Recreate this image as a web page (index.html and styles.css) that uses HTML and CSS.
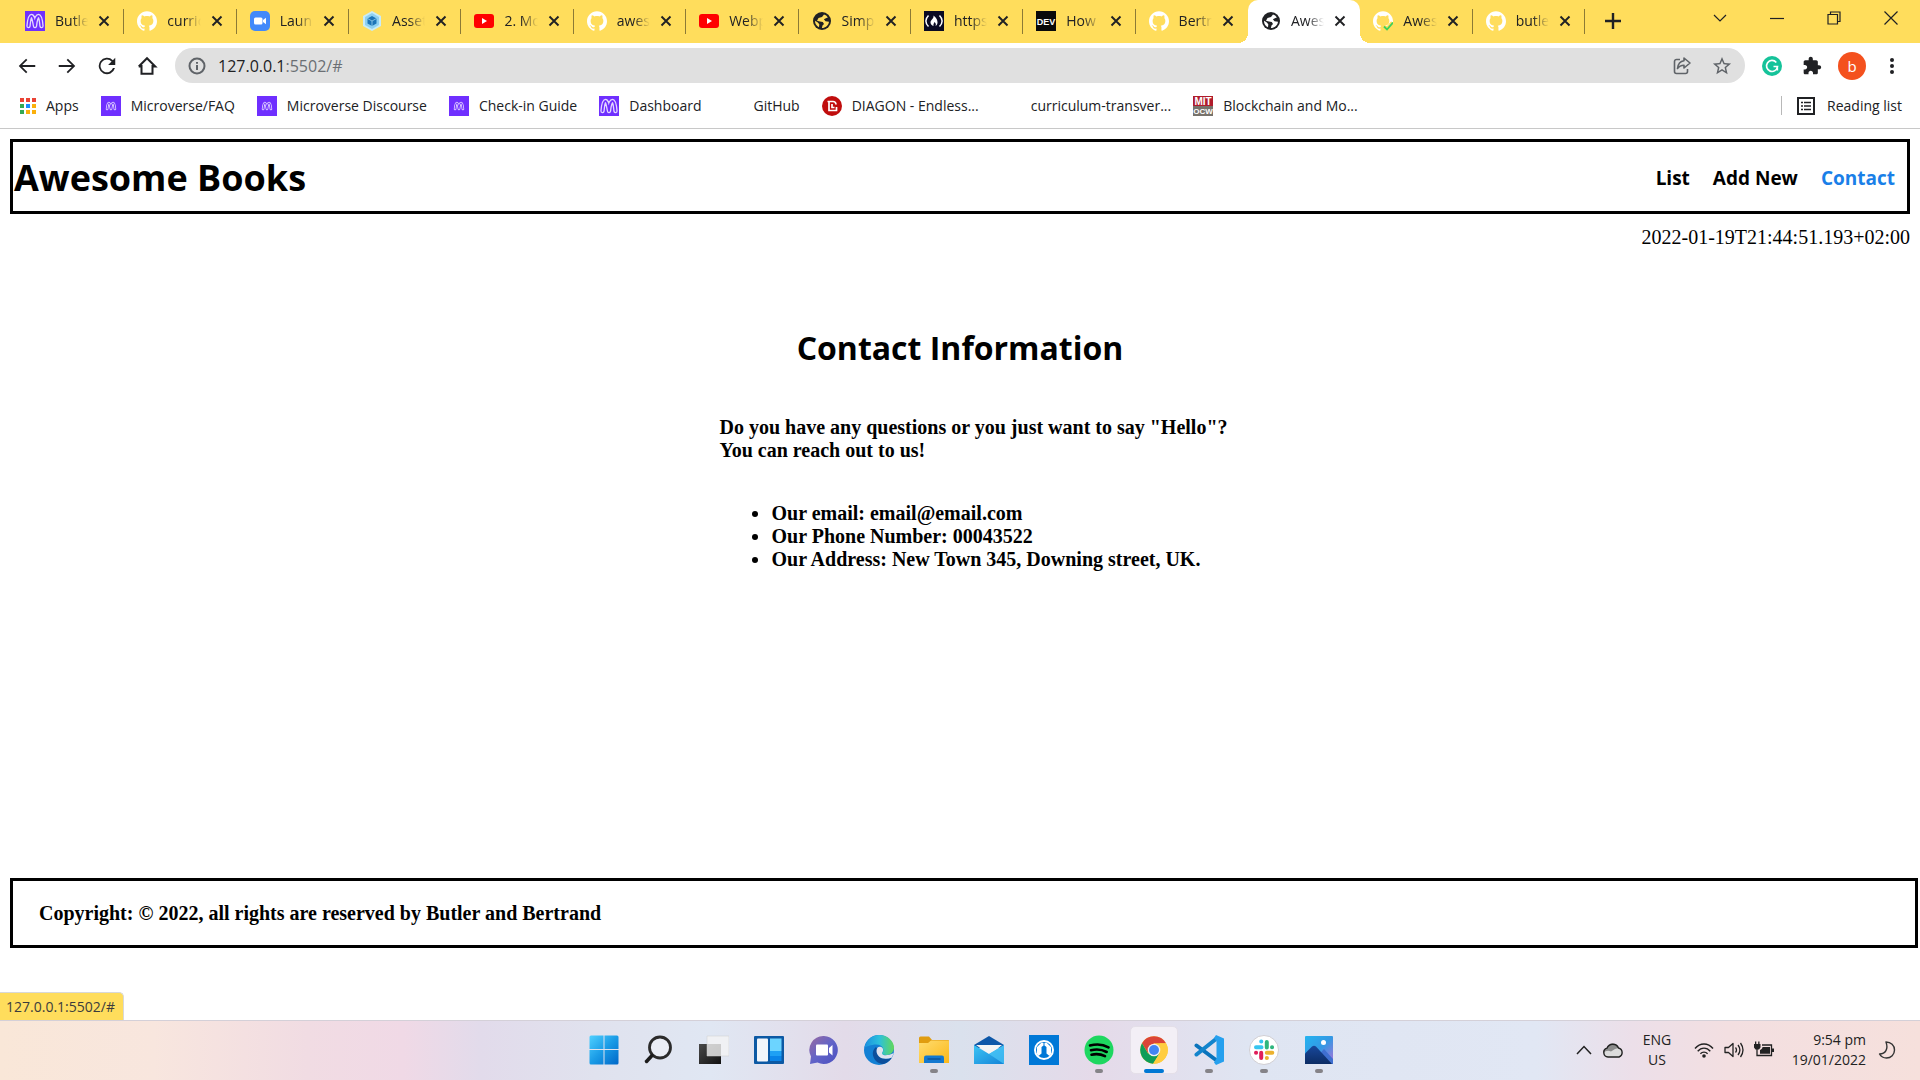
FILE: index.html
```
<!DOCTYPE html>
<html lang="en">
<head>
<meta charset="utf-8">
<title>Awesome Books</title>
<meta name="viewport" content="width=device-width, initial-scale=1">
<link rel="stylesheet" href="styles.css">
</head>
<body>
<svg class="sprite" aria-hidden="true">
  <defs>
    <linearGradient id="g-win" x1="0" y1="0" x2="1" y2="1"><stop offset="0" stop-color="#4fd0ff"/><stop offset=".5" stop-color="#1a9be6"/><stop offset="1" stop-color="#0067c8"/></linearGradient>
    <linearGradient id="g-dark" x1="0" y1="0" x2="1" y2="1"><stop offset="0" stop-color="#4a4a4a"/><stop offset="1" stop-color="#111"/></linearGradient>
    <linearGradient id="g-chat" x1="0" y1="0" x2="1" y2="1"><stop offset="0" stop-color="#9a6aa0"/><stop offset=".5" stop-color="#6264c8"/><stop offset="1" stop-color="#4a4fc0"/></linearGradient>
    <linearGradient id="g-edge" x1="0" y1="0" x2="1" y2="0"><stop offset="0" stop-color="#1a8fe0"/><stop offset=".5" stop-color="#2cc0dc"/><stop offset="1" stop-color="#62d858"/></linearGradient>
    <linearGradient id="g-folder" x1="0" y1="0" x2="1" y2="1"><stop offset="0" stop-color="#ffdc70"/><stop offset="1" stop-color="#fbb818"/></linearGradient>
    <linearGradient id="g-mail" x1="0" y1="0" x2="1" y2="1"><stop offset="0" stop-color="#3cc4f4"/><stop offset="1" stop-color="#1484d8"/></linearGradient>
    <linearGradient id="g-photo" x1="0" y1="0" x2="1" y2="1"><stop offset="0" stop-color="#24b4f0"/><stop offset=".5" stop-color="#3498e4"/><stop offset="1" stop-color="#b070d8"/></linearGradient>
    <linearGradient id="g-hill" x1="0" y1="0" x2="0" y2="1"><stop offset="0" stop-color="#18489c"/><stop offset="1" stop-color="#0c2c64"/></linearGradient>
  </defs>
  <symbol id="loops" viewBox="0 0 20 20"><g fill="none" stroke-linecap="round" stroke-linejoin="round"><path stroke="#e4d8ff" stroke-width="4.400" d="M3.500 15C4 9 5 5 6.500 5s2.500 4 3.500 10C10.500 9 12 5 13.500 5s2.500 4 3 10"/><path stroke="#6f2fff" stroke-width="1.800" d="M3.500 15C4 9 5 5 6.500 5s2.500 4 3.500 10C10.500 9 12 5 13.500 5s2.500 4 3 10"/></g></symbol>
  <symbol id="micro" viewBox="0 0 20 20"><path fill="#6f2fff" d="M0 0h20v20H0z"/><use href="#loops" width="20" height="20"/></symbol>
  <symbol id="micro-sm" viewBox="0 0 20 20"><path fill="#6f2fff" d="M0 0h20v20H0z"/><use href="#loops" x="4" y="4" width="12" height="12"/></symbol>
  <symbol id="github" viewBox="0 0 24 24"><path fill="#fff" d="M12 .297c-6.630 0-12 5.373-12 12 0 5.303 3.438 9.800 8.205 11.385.6.113.82-.258.82-.577 0-.285-.01-1.040-.015-2.040-3.338.724-4.042-1.610-4.042-1.610C4.422 18.070 3.633 17.700 3.633 17.700c-1.087-.744.084-.729.084-.729 1.205.084 1.838 1.236 1.838 1.236 1.070 1.835 2.809 1.305 3.495.998.108-.776.417-1.305.76-1.605-2.665-.3-5.466-1.332-5.466-5.930 0-1.310.465-2.380 1.235-3.220-.135-.303-.54-1.523.105-3.176 0 0 1.005-.322 3.300 1.230.96-.267 1.980-.399 3-.405 1.020.006 2.040.138 3 .405 2.280-1.552 3.285-1.230 3.285-1.230.645 1.653.24 2.873.12 3.176.765.84 1.230 1.910 1.230 3.220 0 4.610-2.805 5.625-5.475 5.920.42.36.81 1.096.81 2.220 0 1.606-.015 2.896-.015 3.286 0 .315.21.69.825.57C20.565 22.092 24 17.592 24 12.297c0-6.627-5.373-12-12-12"/></symbol>
  <symbol id="zoomapp" viewBox="0 0 20 20"><rect width="20" height="20" rx="5" fill="#4289fa"/><rect x="4" y="6.500" width="8.500" height="7" rx="1.500" fill="#fff"/><path fill="#fff" d="M13 9l3-2.200v6.400L13 11z"/></symbol>
  <symbol id="webpack" viewBox="0 0 20 20"><path fill="#c8ecfa" d="M10 0l9 5v10l-9 5-9-5V5z"/><path fill="#8ed0f2" d="M10 2l7 4v8l-7 4-7-4V6z"/><path fill="#1c74b8" d="M10 5l4.500 2.500v5L10 15l-4.500-2.500v-5z"/><path fill="none" stroke="#a8dcf4" stroke-width=".7" d="M5.500 7.500L10 10l4.500-2.500M10 10v5"/></symbol>
  <symbol id="youtube" viewBox="0 0 20 20"><rect y="3" width="20" height="14" rx="3" fill="#f00"/><path fill="#fff" d="M8 7l5 3-5 3z"/></symbol>
  <symbol id="globe" viewBox="0 0 20 20"><circle cx="10" cy="10" r="9" fill="#202124"/><path class="globe-land" d="M12 3.500l-2 2.600-3.500 1L5 9.800l3 .7 2.800.5 1.200 2-1.500 1.500-.6 2.500c3.500 0 6.800-2.600 7.100-6.300l-3.500-.4-1.600-2.100 2.500-1.300 1.500-.5A7 7 0 0 0 12 3.500zM3 9.800l2.500 1.500 1.800 2-.3 2.900A7 7 0 0 1 3 9.800z"/></symbol>
  <symbol id="fcc" viewBox="0 0 20 20"><path fill="#0a0a23" d="M0 0h20v20H0z"/><path fill="none" stroke="#fff" stroke-width="1.500" d="M4.500 4.500C1 8 1 12 4.500 15.500M15.500 4.500C19 8 19 12 15.500 15.500"/><path fill="#fff" d="M9.500 4.500c3 2 4 5 4 7s-1 3-2 3.500c.7-1.500.5-2.500-1-4-.3 1-1.500 2-1 4-1.500-.5-3-1.600-3-3.600 0-2.500 3.500-3.400 3-6.900z"/></symbol>
  <symbol id="close" viewBox="0 0 12 12"><path stroke="#202124" stroke-width="1.900" d="M1.500 1.500l9 9m0-9l-9 9"/></symbol>
</svg>

<header class="browser">
  <div class="tabbar">
    <div class="tabs" role="tablist">
      <div class="tab"><svg class="fav"><use href="#micro"/></svg><span class="tab-title">Butle</span><button class="tab-close" aria-label="Close tab"><svg><use href="#close"/></svg></button></div>
      <div class="tab"><svg class="fav"><use href="#github"/></svg><span class="tab-title">curric</span><button class="tab-close" aria-label="Close tab"><svg><use href="#close"/></svg></button></div>
      <div class="tab"><svg class="fav"><use href="#zoomapp"/></svg><span class="tab-title">Laun</span><button class="tab-close" aria-label="Close tab"><svg><use href="#close"/></svg></button></div>
      <div class="tab"><svg class="fav"><use href="#webpack"/></svg><span class="tab-title">Asset</span><button class="tab-close" aria-label="Close tab"><svg><use href="#close"/></svg></button></div>
      <div class="tab"><svg class="fav"><use href="#youtube"/></svg><span class="tab-title">2. Mo</span><button class="tab-close" aria-label="Close tab"><svg><use href="#close"/></svg></button></div>
      <div class="tab"><svg class="fav"><use href="#github"/></svg><span class="tab-title">awes</span><button class="tab-close" aria-label="Close tab"><svg><use href="#close"/></svg></button></div>
      <div class="tab"><svg class="fav"><use href="#youtube"/></svg><span class="tab-title">Webp</span><button class="tab-close" aria-label="Close tab"><svg><use href="#close"/></svg></button></div>
      <div class="tab"><svg class="fav"><use href="#globe"/></svg><span class="tab-title">Simp</span><button class="tab-close" aria-label="Close tab"><svg><use href="#close"/></svg></button></div>
      <div class="tab"><svg class="fav"><use href="#fcc"/></svg><span class="tab-title">https</span><button class="tab-close" aria-label="Close tab"><svg><use href="#close"/></svg></button></div>
      <div class="tab"><svg class="fav" viewBox="0 0 20 20"><path fill="#0a0a0a" d="M0 0h20v20H0z"/><text x="10" y="14" class="ico-dev">DEV</text></svg><span class="tab-title">How</span><button class="tab-close" aria-label="Close tab"><svg><use href="#close"/></svg></button></div>
      <div class="tab before-active"><svg class="fav"><use href="#github"/></svg><span class="tab-title">Bertr</span><button class="tab-close" aria-label="Close tab"><svg><use href="#close"/></svg></button></div>
      <div class="tab active"><svg class="fav"><use href="#globe"/></svg><span class="tab-title">Awes</span><button class="tab-close" aria-label="Close tab"><svg><use href="#close"/></svg></button></div>
      <div class="tab"><svg class="fav" viewBox="0 0 20 20"><use href="#github" width="20" height="20"/><path stroke="#ffdd5c" stroke-width="5" fill="none" d="M11 16l3 3 6-7"/><path stroke="#3bd15a" stroke-width="1.800" fill="none" d="M11 15.500l3 3 6-7"/></svg><span class="tab-title">Awes</span><button class="tab-close" aria-label="Close tab"><svg><use href="#close"/></svg></button></div>
      <div class="tab"><svg class="fav"><use href="#github"/></svg><span class="tab-title">butle</span><button class="tab-close" aria-label="Close tab"><svg><use href="#close"/></svg></button></div>
    </div>
    <button class="new-tab" aria-label="New tab"><svg viewBox="0 0 16 16" width="16" height="16"><path stroke="#202124" stroke-width="2.400" d="M8 0v16M0 8h16"/></svg></button>
    <div class="window-controls">
      <button aria-label="Search tabs"><svg viewBox="0 0 14 14" width="14" height="14"><path d="M1 4l6 6 6-6"/></svg></button>
      <button aria-label="Minimize"><svg viewBox="0 0 14 14" width="14" height="14"><path d="M0 7.500h14"/></svg></button>
      <button aria-label="Restore"><svg viewBox="0 0 14 14" width="14" height="14"><path d="M1 3.500h9.500V13H1zM3.500 3.500V1H13v9.500h-2.500"/></svg></button>
      <button aria-label="Close"><svg viewBox="0 0 14 14" width="14" height="14"><path d="M.5.500l13 13m0-13l-13 13"/></svg></button>
    </div>
  </div>

  <div class="toolbar">
    <div class="nav-buttons">
      <button aria-label="Back"><svg viewBox="0 0 24 24"><path d="M21 11H6.800l5.600-5.600L11 4l-8 8 8 8 1.400-1.400L6.800 13H21z"/></svg></button>
      <button aria-label="Forward"><svg viewBox="0 0 24 24"><path d="M3 11h14.200l-5.600-5.600L13 4l8 8-8 8-1.400-1.400 5.600-5.600H3z"/></svg></button>
      <button aria-label="Reload"><svg viewBox="0 0 24 24"><path d="M18.400 5.600A9 9 0 1 0 20.700 14.300h-2.200A7 7 0 1 1 17 7l-3.800 3.800H21V3z"/></svg></button>
      <button aria-label="Home"><svg viewBox="0 0 24 24"><path fill="none" stroke="#202124" stroke-width="2.200" d="M6 11v9.500h12V11M3 12.500L12 3.500l9 9h-3.200M3 12.500h3"/></svg></button>
    </div>
    <div class="omnibox">
      <svg class="info" viewBox="0 0 18 18"><circle cx="9" cy="9" r="7.500"/><path d="M9 8v5M9 5v1.800"/></svg>
      <a class="url" href="#">127.0.0.1<span>:5502/#</span></a>
      <button aria-label="Share"><svg viewBox="0 0 20 20"><path fill="none" stroke="#5f6368" stroke-width="1.600" stroke-linejoin="round" d="M8 3.500H4.500a2 2 0 0 0-2 2v10a2 2 0 0 0 2 2h9a2 2 0 0 0 2-2V13M12 2l6 5-6 5V9.200c-3 0-5 1-6.500 3.300C6 8 8.500 5.200 12 4.800z"/></svg></button>
      <button aria-label="Bookmark"><svg viewBox="1 1 22 22"><path fill="#5f6368" d="M22 9.240l-7.190-.62L12 2 9.190 8.630 2 9.240l5.460 4.730L5.820 21 12 17.270 18.180 21l-1.630-7.030L22 9.240zM12 15.400l-3.760 2.270 1-4.280-3.320-2.880 4.380-.38L12 6.100l1.710 4.040 4.380.38-3.320 2.880 1 4.280L12 15.400z"/></svg></button>
    </div>
    <div class="extensions">
      <button aria-label="Grammarly"><svg viewBox="0 0 20 20" width="20" height="20"><circle cx="10" cy="10" r="10" fill="#15c39a"/><path fill="none" stroke="#fff" stroke-width="1.700" d="M14.300 6.500A5.500 5.500 0 1 0 15.500 10.500H11.500M15.300 10.500V14.500"/></svg></button>
      <button aria-label="Extensions"><svg viewBox="0 0 24 24" width="20" height="20"><path fill="#202124" d="M20.500 11H19V7c0-1.100-.9-2-2-2h-4V3.500C13 2.120 11.880 1 10.500 1S8 2.120 8 3.500V5H4c-1.100 0-1.990.9-1.990 2v3.800H3.500c1.490 0 2.700 1.210 2.700 2.700s-1.210 2.700-2.700 2.700H2V20c0 1.100.9 2 2 2h3.800v-1.500c0-1.490 1.210-2.700 2.700-2.700 1.490 0 2.700 1.210 2.700 2.700V22H17c1.100 0 2-.9 2-2v-4h1.500c1.380 0 2.500-1.120 2.500-2.500S21.880 11 20.500 11z"/></svg></button>
      <button class="avatar" aria-label="Profile">b</button>
      <button aria-label="Menu"><svg viewBox="0 0 20 20" width="20" height="20"><g fill="#202124"><circle cx="10" cy="4" r="2"/><circle cx="10" cy="10" r="2"/><circle cx="10" cy="16" r="2"/></g></svg></button>
    </div>
  </div>

  <nav class="bookmarks" aria-label="Bookmarks">
    <a href="#" class="apps"><svg viewBox="0 0 16 16"><path fill="#ea4335" d="M0 0h4v4H0zM6 0h4v4H6zM12 0h4v4h-4z"/><path fill="#34a853" d="M0 6h4v4H0zM0 12h4v4H0z"/><path fill="#1a8cff" d="M6 6h4v4H6z"/><path fill="#fbb00c" d="M12 6h4v4h-4zM6 12h4v4H6zM12 12h4v4h-4z"/></svg>Apps</a>
    <a href="#"><svg><use href="#micro-sm"/></svg>Microverse/FAQ</a>
    <a href="#"><svg><use href="#micro-sm"/></svg>Microverse Discourse</a>
    <a href="#"><svg><use href="#micro-sm"/></svg>Check-in Guide</a>
    <a href="#"><svg><use href="#micro"/></svg>Dashboard</a>
    <a href="#"><svg><use href="#github"/></svg>GitHub</a>
    <a href="#"><svg viewBox="0 0 20 20"><circle cx="10" cy="10" r="10" fill="#c00d0d"/><path fill="none" stroke="#fff" stroke-width="1.700" d="M5.500 5.500H11a3 3 0 0 1 3 3M7 5.500v9h7.500v-3.500M10 8v3.500h2.500"/></svg>DIAGON - Endless...</a>
    <a href="#"><svg><use href="#github"/></svg>curriculum-transver...</a>
    <a href="#"><svg viewBox="0 0 20 20"><path fill="#b01c2c" d="M0 0h20v10H0z"/><path fill="#77736c" d="M0 10h20v10H0z"/><text x="10" y="9" class="ico-mit">MIT</text><text x="10" y="18" class="ico-ocw">OCW</text></svg>Blockchain and Mo...</a>
    <a href="#" class="reading"><svg viewBox="0 0 18 18"><path fill="none" stroke="#202124" stroke-width="2" d="M1 1h16v16H1z"/><path stroke="#202124" stroke-width="1.600" d="M4 5.500h2M7 5.500h7M4 9h2M7 9h7M4 12.500h2M7 12.500h7"/></svg>Reading list</a>
  </nav>
</header>

<div class="page">
  <header class="site-header">
    <h1>Awesome Books</h1>
    <nav class="site-nav"><a href="#">List</a><a href="#">Add New</a><a href="#" class="current">Contact</a></nav>
  </header>
  <time class="stamp">2022-01-19T21:44:51.193+02:00</time>
  <main class="contact">
    <h2>Contact Information</h2>
    <div class="details">
      <p>Do you have any questions or you just want to say "Hello"?<br>You can reach out to us!</p>
      <ul>
        <li>Our email: email@email.com</li>
        <li>Our Phone Number: 00043522</li>
        <li>Our Address: New Town 345, Downing street, UK.</li>
      </ul>
    </div>
  </main>
  <footer class="site-footer">Copyright: © 2022, all rights are reserved by Butler and Bertrand</footer>
  <div class="status">127.0.0.1:5502/#</div>
</div>

<div class="taskbar">
  <div class="launcher">
    <button aria-label="Start"><svg viewBox="0 0 30 30"><path fill="url(#g-win)" d="M2 .5h12.500V14H.5V2A1.500 1.500 0 0 1 2 .5zM15.500.5H28A1.500 1.500 0 0 1 29.500 2v12h-14zM.5 15h14v14.500H2A1.500 1.500 0 0 1 .5 28zM15.500 15h14v13a1.500 1.500 0 0 1-1.500 1.500H15.500z"/></svg></button>
    <button aria-label="Search"><svg viewBox="0 0 30 30"><circle cx="16" cy="12.500" r="10.500" fill="#ffffff55" stroke="#2b2b2b" stroke-width="2.800"/><path stroke="#1c1c1c" stroke-width="3.500" stroke-linecap="round" d="M8 20.500l-5.500 6"/></svg></button>
    <button aria-label="Task view"><svg viewBox="0 0 30 30"><path fill="url(#g-dark)" d="M0 9h22v20H0z"/><path fill="#f4f4f4" fill-opacity=".8" stroke="#ccc" stroke-width=".5" d="M8 1h22v20H8z"/></svg></button>
    <button aria-label="Widgets"><svg viewBox="0 0 30 30"><rect y="1" width="30" height="28" rx="1" fill="#0c59a4"/><rect x="3" y="3.500" width="11" height="23" rx="1" fill="#f3f6fa"/><path fill="#6cd4ff" d="M16 3.500h11.500V16H16z"/><path fill="#1ea0f4" d="M16 16h11.500v5H16z"/><path fill="#0a84e8" d="M16 21h11.500v5H16z"/></svg></button>
    <button aria-label="Chat"><svg viewBox="0 0 30 30"><path fill="url(#g-chat)" d="M15 1a14 14 0 1 1-6.500 26.500L1 29l1-7.500A14 14 0 0 1 15 1z"/><rect x="7" y="9.500" width="12" height="11" rx="1" fill="#fff"/><path fill="#fff" d="M20 13l3.500-3v10.500l-3.500-3z"/></svg></button>
    <button aria-label="Edge"><svg viewBox="0 0 30 30"><circle cx="15" cy="15" r="15" fill="#1380d4"/><path fill="url(#g-edge)" d="M.5 12.500C2 5 8 0 15 0c9 0 15 6.500 15 12.500 0 5-4 7.500-8 7.500-3 0-4.500-1-4-2 1-1 1.500-2 1.200-4C18.500 11 16 9.500 12 9.500 7 9.500 2.500 12 .5 12.500z"/><path fill="#0c4f9c" d="M12 12c-3 2.500-4 6-2.500 10 1.500 4.500 6 7 10 7a15 15 0 0 0 8.500-6.500c-5 2.500-12 1.500-13.500-2.500-.8-2-.6-4-.5-5z"/><path fill="#dfe2ee" d="M12.500 16c0-3 1.500-4.500 3.800-4.300C18.500 12 19.500 14 19 16c-.6 1.800-1.500 2-.8 3 1.500 2 6.500 1.500 11.500-1l-1.700 4.500c-5 2-10.500 1.500-13-1-1.500-1.500-2.500-3.500-2.500-5.500z"/></svg></button>
    <button aria-label="File Explorer" class="running"><svg viewBox="0 0 30 30"><path fill="#e09c10" d="M0 3a1.500 1.500 0 0 1 1.500-1.500H10L13 5H29a1 1 0 0 1 1 1v6H0z"/><path fill="url(#g-folder)" d="M0 8h9l3-2.500h17a1 1 0 0 1 1 1V28H0z"/><path fill="#1278d0" d="M5 28v-5.500a2 2 0 0 1 2-2h16a2 2 0 0 1 2 2V28z"/><path stroke="#0b4a8c" stroke-width="1.200" d="M8.500 24h13"/></svg></button>
    <button aria-label="Mail"><svg viewBox="0 0 30 30"><path fill="#0d57a8" d="M0 10L15 1l15 9v3H0z"/><path fill="#f4f4f4" d="M2 10h26L16 20z"/><path fill="url(#g-mail)" d="M0 10l15 9 15-9v19H0z"/><path fill="#4cc8f8" fill-opacity=".7" d="M30 10v19L15 19z"/></svg></button>
    <button aria-label="Headset app"><svg viewBox="0 0 30 30"><path fill="#0078d7" d="M0 0h30v30H0z"/><circle cx="15" cy="15" r="9" fill="none" stroke="#fff" stroke-width="2"/><path fill="#fff" d="M8 12l4.500-4.500L14.500 8v2.500L12.500 12v6.500L9.500 21 8 19zM22 12l-4.500-4.500L15.500 8v2.500l2 1.500v6.500l3 2.500 1.500-2z"/></svg></button>
    <button aria-label="Spotify" class="running"><svg viewBox="0 0 30 30"><circle cx="15" cy="15" r="14.500" fill="#1ed760"/><path fill="none" stroke="#000" stroke-linecap="round" stroke-width="2.600" d="M6 10.500c6-1.600 13.500-1 18.500 1.800M7 15.300c5.500-1.400 11-.8 15.700 1.700M7.500 19.700c4.500-1.100 9.500-.6 13.500 1.500"/></svg></button>
    <button aria-label="Chrome" class="running focused"><svg viewBox="0 0 30 30"><circle cx="15" cy="15" r="13.800" fill="#ffcd40"/><path fill="#db4437" d="M3 8.200A13.800 13.800 0 0 1 27 8.200H15L9 18z"/><path fill="#0f9d58" d="M3 8.200a13.800 13.800 0 0 0 11 20.600L20.500 18.500H9z"/><path fill="#ffcd40" d="M27 8.200A13.800 13.800 0 0 1 14.200 28.800l6.500-10.500V8.200z"/><circle cx="15" cy="15" r="6.300" fill="#f1f1f1"/><circle cx="15" cy="15" r="5" fill="#4285f4"/></svg></button>
    <button aria-label="Visual Studio Code" class="running"><svg viewBox="0 0 30 30"><path fill="none" stroke="#0a74bc" stroke-width="4" stroke-linecap="round" d="M2.500 10.500L22 25"/><path fill="none" stroke="#1284cc" stroke-width="4" stroke-linecap="round" d="M2.500 19.500L22 4"/><path fill="#26a0ee" d="M22 0l8 3.500v23L22 30l-2-2.500 2.500-4V6.500L20 3z"/></svg></button>
    <button aria-label="Slack" class="running"><svg viewBox="0 0 30 30"><circle cx="15" cy="15" r="14.500" fill="#fff" stroke="#c8c4c8" stroke-width=".8"/><g fill="none" stroke-width="4" stroke-linecap="round"><path stroke="#36c5f0" d="M7 12.200h5.500M12.200 6.500h.1"/><path stroke="#2eb67d" d="M17.800 7v5.500M23 12.200h.1"/><path stroke="#ecb22e" d="M17.800 17.800h5.500M17.800 23h.1"/><path stroke="#e01e5a" d="M12.200 17.800V23M7 17.800h.1"/></g></svg></button>
    <button aria-label="Photos" class="running"><svg viewBox="0 0 30 30"><rect x="1" y="1" width="28" height="28" rx="1" fill="url(#g-photo)"/><path fill="#3f6fd0" d="M13 22l7-8 9 10v5H13z"/><path fill="url(#g-hill)" d="M1 18.500l7-7q2-1.500 4 0L28 29H1z"/><circle cx="19.500" cy="7.500" r="2.500" fill="#fff"/></svg></button>
  </div>
  <div class="tray">
    <button aria-label="Show hidden icons"><svg viewBox="0 0 16 10" width="16" height="10"><path fill="none" stroke="#222" stroke-width="1.500" d="M1 9l7-7.500L15 9"/></svg></button>
    <button aria-label="OneDrive"><svg viewBox="0 0 22 16" width="22" height="16"><path fill="#dcdcdc" d="M6 15a4.500 4.500 0 0 1-1-8.800A6.200 6.200 0 0 1 16.500 6a4.700 4.700 0 0 1 .5 9z"/><path fill="#8c8c8c" d="M1.500 11C1 8 3 6.500 5 6.200 6.500 0 14.500 0 16.500 6L13 7l-4 2.500C6.500 8 3.500 8.500 1.500 11z"/><path fill="none" stroke="#222" stroke-width="1.400" d="M6 15a4.500 4.500 0 0 1-1-8.800A6.200 6.200 0 0 1 16.500 6a4.700 4.700 0 0 1 .5 9z"/></svg></button>
    <div class="lang">ENG<br>US</div>
    <div class="sys">
      <svg viewBox="0 0 20 20"><g fill="none" stroke="#222" stroke-width="1.400"><path d="M1 8.500C6 2.500 14 2.500 19 8.500M3.700 11.300c3.600-4.200 9-4.200 12.600 0M6.400 13.800c2.100-2.300 5.100-2.300 7.200 0"/></g><circle cx="10" cy="16" r="1.800" fill="#222"/></svg>
      <svg viewBox="0 0 20 20"><path fill="none" stroke="#222" stroke-width="1.300" stroke-linejoin="round" d="M1 7.500h3.500L9 3.500v13l-4.500-4H1zM11.500 7.500q2 2.500 0 5M14 5q3.800 5 0 10M16.500 3q5 7 0 14"/></svg>
      <svg viewBox="0 0 20 20"><path fill="none" stroke="#222" stroke-width="1.300" d="M8 5h9.500v10.500H6M3 9v6.500h3"/><path fill="#222" d="M8.500 7H16v6.800H6V10c1.500-.7 2.500-1.500 2.500-3zM18 8.500h2v3.500h-2zM0 4h6.500v3.500L5 9.500H1.500L0 7.500zM1 1.500h1.300V4H1zM4.200 1.500h1.300V4H4.200z"/></svg>
    </div>
    <div class="clock">9:54 pm<br>19/01/2022</div>
    <button aria-label="Focus assist"><svg viewBox="0 0 18 18" width="18" height="18"><path fill="none" stroke="#333" stroke-width="1.400" stroke-linejoin="round" d="M8 1c5 0 8.500 3.500 8.500 8s-3.500 8-8 8c-3 0-5.500-1.500-7-4 6 0 9-5 6.500-12z"/></svg></button>
  </div>
</div>
</body>
</html>
```
FILE: styles.css
```
* { box-sizing: border-box; }

body {
  margin: 0;
  min-height: 100vh;
  display: flex;
  flex-direction: column;
  background: #fff;
  color: #000;
  font-family: "Open Sans", "Noto Sans", sans-serif;
}

button {
  display: flex;
  align-items: center;
  justify-content: center;
  padding: 0;
  border: 0;
  background: none;
  font: inherit;
}

a { color: inherit; text-decoration: none; }
svg { display: block; flex: none; }
.sprite { position: absolute; width: 0; height: 0; }

.ico-dev, .ico-mit, .ico-ocw {
  font-family: "Liberation Sans", sans-serif;
  font-weight: bold;
  text-anchor: middle;
  fill: #fff;
}
.ico-dev { font-size: 9px; }
.ico-mit { font-size: 10px; }
.ico-ocw { font-size: 8px; }

/* Tab strip */
.tabbar {
  display: flex;
  height: 43px;
  padding-left: 12px;
  background: #ffdd5c;
  font-size: 14px;
  color: #202124;
}
.tabs { flex: 1; display: flex; min-width: 0; }
.tab {
  --land: #ffdd5c;
  position: relative;
  flex: 1 1 0;
  min-width: 0;
  display: flex;
  align-items: center;
  padding: 0 14px 2px 13px;
}
.tab::after {
  content: "";
  position: absolute;
  right: 0;
  top: 9px;
  width: 1px;
  height: 25px;
  background: #8c7a35;
}
.tab.before-active::after { display: none; }
.tab.active {
  --land: #fff;
  background: #fff;
  border-radius: 10px 10px 0 0;
}
.tab.active::before, .tab.active::after {
  content: "";
  position: absolute;
  top: auto;
  bottom: 0;
  width: 10px;
  height: 10px;
}
.tab.active::before { left: -10px; background: radial-gradient(circle at 0 0, #ffdd5c 10px, #fff 10px); }
.tab.active::after { right: -10px; background: radial-gradient(circle at 100% 0, #ffdd5c 10px, #fff 10px); }
.globe-land { fill: var(--land); }
.fav { width: 20px; height: 20px; margin-right: 10px; }
.tab-title {
  flex: 1;
  min-width: 0;
  overflow: hidden;
  white-space: nowrap;
  -webkit-mask-image: linear-gradient(to right, #000 50%, transparent);
  mask-image: linear-gradient(to right, #000 50%, transparent);
}
.tab-close { margin-left: 10px; }
.tab-close svg { width: 12px; height: 12px; }
.new-tab { width: 55px; padding-bottom: 1px; }
.window-controls { display: flex; padding: 0 1px 0 51px; height: 36px; }
.window-controls button { width: 57px; }
.window-controls path { fill: none; stroke: #202124; stroke-width: 1.2; }

/* Address bar */
.toolbar { display: flex; align-items: center; height: 45px; padding-left: 7px; }
.nav-buttons { display: flex; padding-right: 8px; }
.nav-buttons button { width: 40px; height: 40px; }
.nav-buttons svg { width: 22px; height: 22px; fill: #202124; }
.omnibox {
  flex: 1;
  display: flex;
  align-items: center;
  height: 35px;
  padding: 0 3px 0 13px;
  border-radius: 18px;
  background: #e0e0e0;
  font-size: 16px;
}
.omnibox button { width: 40px; }
.omnibox button svg { width: 20px; height: 20px; }
.info { width: 18px; height: 18px; fill: none; stroke: #5f6368; stroke-width: 2; }
.url { flex: 1; padding-left: 12px; color: #202124; }
.url span { color: #6b6f74; }
.extensions { display: flex; align-items: center; padding: 0 8px 0 7px; }
.extensions button { width: 40px; }
.extensions .avatar {
  width: 28px;
  height: 28px;
  margin: 0 6px;
  border-radius: 50%;
  background: #f4511e;
  color: #fff;
  font-size: 15px;
}

/* Bookmarks bar */
.bookmarks {
  display: flex;
  align-items: center;
  gap: 22px;
  height: 41px;
  padding: 0 18px 5px 20px;
  border-bottom: 1px solid #c8c8c8;
  color: #202124;
  font-size: 14px;
  white-space: nowrap;
}
.bookmarks a { display: flex; align-items: center; gap: 10px; }
.bookmarks svg { width: 20px; height: 20px; }
.bookmarks .apps svg { width: 16px; height: 16px; }
.bookmarks .reading { gap: 12px; margin-left: auto; padding-left: 15px; border-left: 1px solid #b8b8b8; }
.bookmarks .reading svg { width: 18px; height: 18px; }

/* Web page */
.page {
  flex: 1;
  position: relative;
  display: flex;
  flex-direction: column;
  padding: 10px 2px 72px 10px;
  font: 20px/23px "Liberation Serif", serif;
}
.site-header {
  display: flex;
  align-items: center;
  justify-content: space-between;
  height: 75px;
  margin-right: 8px;
  padding: 3px 12px 0 1px;
  border: 3px solid #000;
  font-family: "Open Sans", "Noto Sans", sans-serif;
}
.site-header h1 { margin: 0; font-size: 36px; font-weight: 700; line-height: 52px; }
.site-nav { display: flex; gap: 23px; font-size: 19px; font-weight: 700; }
.site-nav .current { color: #1a7fe8; }
.stamp { align-self: flex-end; margin: 12px 8px 0 0; }
.contact { display: flex; flex-direction: column; align-items: center; padding: 73px 8px 0 0; font-weight: 700; }
.contact h2 {
  margin: 0 0 42px;
  font: 700 32px/52px "Open Sans", "Noto Sans", sans-serif;
}
.details { padding-left: 27px; }
.details p { margin: 0 0 40px; }
.details ul { margin: 0; padding-left: 52px; }
.site-footer {
  margin-top: auto;
  padding: 21px 26px 20px;
  border: 3px solid #000;
  font-weight: 700;
}
.status {
  position: absolute;
  left: 0;
  bottom: 0;
  padding: 0 8px 0 6px;
  border: 1px solid #d8d8d8;
  border-width: 1px 1px 0 0;
  border-radius: 0 5px 0 0;
  background: #ffdd5c;
  color: #3c3c3c;
  font: 14px/27px "Open Sans", "Noto Sans", sans-serif;
}

/* Taskbar */
.taskbar {
  display: grid;
  grid-template-columns: 1fr auto 1fr;
  align-items: center;
  height: 60px;
  padding: 0 0 2px 2px;
  border-top: 1px solid #d4d0d8;
  background: linear-gradient(to right, #f9e7d8 0, #f8e6de 8%, #f1dce3 16%, #f0d9e6 21%, #e2dbeb 25%, #e0e2ee 31%, #e0e7f3 37%, #e3dbe9 44%, #dae1ed 50%, #e5dae9 57%, #dfe5f2 65%, #e1e7f4 80%, #ecdfe9 85%, #f3dfe1 90%, #f6e0dc 100%);
  color: #222;
  font-size: 14px;
  line-height: 20px;
}
.launcher { grid-column: 2; display: flex; }
.launcher button { position: relative; width: 55px; height: 57px; }
.launcher svg { position: relative; width: 30px; height: 30px; }
.running::after {
  content: "";
  position: absolute;
  bottom: 5px;
  left: 24px;
  width: 8px;
  height: 4px;
  border-radius: 2px;
  background: #858388;
}
.focused::before {
  content: "";
  position: absolute;
  inset: 5px 3px 4px 4px;
  border: 1px solid #e4dfe8;
  border-radius: 5px;
  background: #f3eff6;
}
.focused::after { left: 18px; width: 20px; background: #0078d4; }
.tray { display: flex; align-items: center; justify-content: flex-end; padding-right: 24px; }
.tray button + button { margin-left: 10px; }
.lang { width: 66px; text-align: center; }
.sys { display: flex; gap: 10px; padding-left: 4px; }
.sys svg { width: 20px; height: 20px; }
.clock { width: 92px; margin-right: 12px; text-align: right; }
```
